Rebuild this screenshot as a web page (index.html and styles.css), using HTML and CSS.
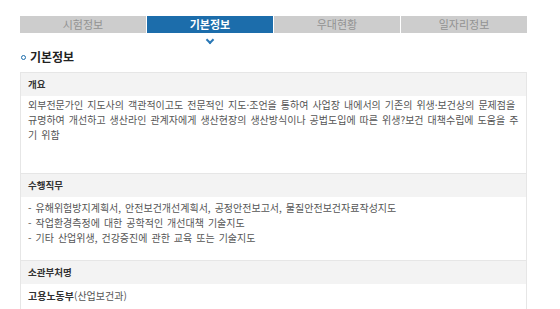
FILE: index.html
```html
<!DOCTYPE html>
<html lang="ko">
<head>
<meta charset="utf-8">
<link rel="stylesheet" href="styles.css">
</head>
<body>
<div class="page">
  <nav class="tabs">
    <div class="tab">시험정보</div>
    <div class="tab active">기본정보</div>
    <div class="tab">우대현황</div>
    <div class="tab">일자리정보</div>
  </nav>
  <h2 class="title"><span class="bullet"></span>기본정보</h2>
  <div class="info">
    <div class="sec">
      <div class="head">개요</div>
      <div class="body b1">외부전문가인 지도사의 객관적이고도 전문적인 지도·조언을 통하여 사업장 내에서의 기존의 위생·보건상의 문제점을 규명하여 개선하고 생산라인 관계자에게 생산현장의 생산방식이나 공법도입에 따른 위생?보건 대책수립에 도움을 주기 위함</div>
    </div>
    <div class="sec">
      <div class="head">수행직무</div>
      <div class="body b2">- 유해위험방지계획서, 안전보건개선계획서, 공정안전보고서, 물질안전보건자료작성지도<br>- 작업환경측정에 대한 공학적인 개선대책 기술지도<br>- 기타 산업위생, 건강증진에 관한 교육 또는 기술지도</div>
    </div>
    <div class="sec">
      <div class="head">소관부처명</div>
      <div class="body b3"><b class="org">고용노동부</b>(산업보건과)</div>
    </div>
  </div>
</div>
</body>
</html>
```
FILE: styles.css
```css
html, body {
  margin: 0;
  padding: 0;
  background: #fff;
}
body {
  font-family: "Noto Sans CJK KR", "Noto Sans", sans-serif;
  color: #444;
}
.page {
  padding: 16px 33px 0 20px;
}
.tabs {
  display: grid;
  grid-template-columns: repeat(4, 1fr);
  gap: 1px;
  height: 17px;
}
.tab {
  position: relative;
  background: #cdcdcd;
  color: #929292;
  font-size: 11px;
  line-height: 17px;
  text-align: center;
}
.tab.active {
  background: #1c6dab;
  color: #fff;
  font-weight: bold;
}
.tab.active::after {
  content: "";
  position: absolute;
  left: 50%;
  top: 21px;
  width: 4px;
  height: 4px;
  margin-left: -3px;
  border-right: 2px solid #2a78b6;
  border-bottom: 2px solid #2a78b6;
  transform: rotate(45deg);
}
.title {
  display: flex;
  align-items: center;
  gap: 4px;
  margin: 16px 0 7px 0;
  font-size: 12px;
  line-height: 16px;
  color: #222;
  font-weight: bold;
}
.bullet {
  width: 3px;
  height: 3px;
  border: 1.5px solid #1c6dab;
  border-radius: 50%;
  margin-left: 1px;
}
.info {
  border: 1px solid #e6e6e6;
}
.sec + .sec {
  border-top: 1px solid #e6e6e6;
}
.head {
  background: #f3f3f3;
  height: 23px;
  line-height: 23px;
  padding: 0 7px;
  font-size: 9.5px;
  font-weight: bold;
  color: #333;
}
.body {
  padding: 0 4px 0 7px;
  font-size: 10px;
  line-height: 15px;
  word-spacing: 1.2px;
  color: #555;
}
.b1 { height: 76px; padding-top: 1px; }
.b2 { height: 60px; padding-top: 3px; }
.b3 { height: 21px; padding-top: 4px; }
.org { font-weight: bold; color: #333; }
```
